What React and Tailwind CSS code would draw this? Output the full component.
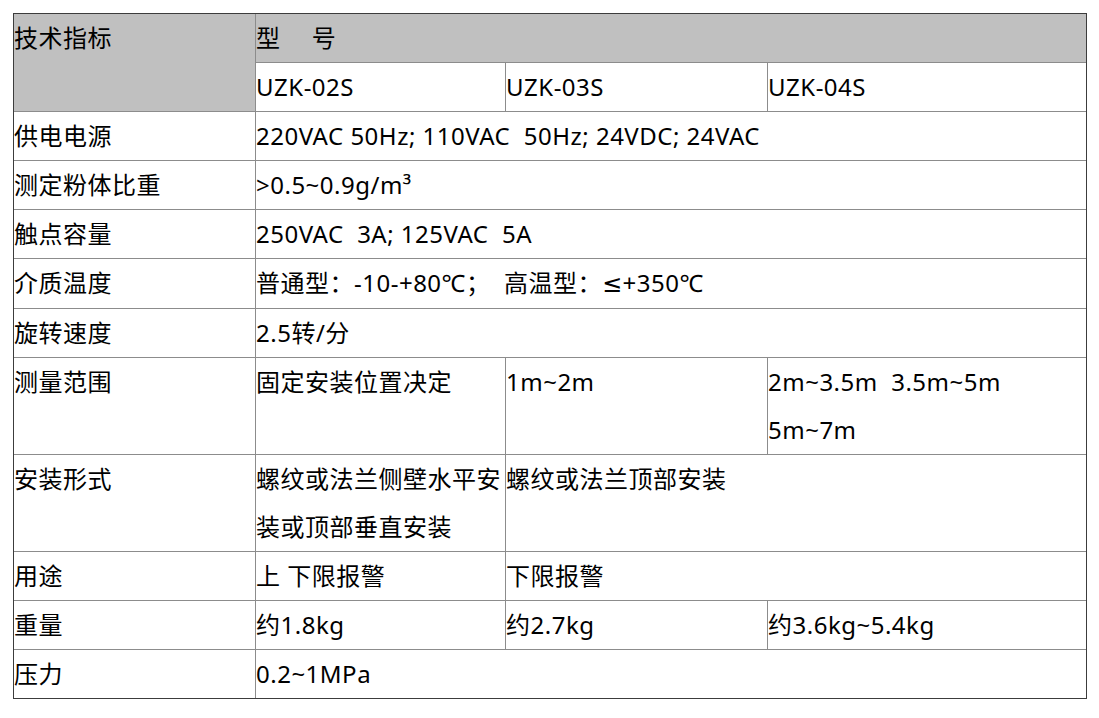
const cell = "border border-[#8c8c8c] p-0 align-top text-left font-normal";

function App() {
  return (
    <div className="min-h-screen bg-white pt-[13px] pl-[13px]">
      <div
        className="w-[1074px] border border-[#3c3c3c] text-[24px] leading-[48px] tracking-[0.5px] text-black"
        style={{ fontFamily: '"Noto Sans", "Noto Sans CJK SC", sans-serif' }}
      >
        <table className="w-full table-fixed border-collapse border-hidden">
          <colgroup>
            <col className="w-[241.5px]" />
            <col className="w-[250px]" />
            <col className="w-[262px]" />
            <col className="w-[318.5px]" />
          </colgroup>
          <tbody>
            <tr>
              <th rowSpan={2} className={cell + " bg-[#c0c0c0]"}>技术指标</th>
              <th colSpan={3} className={cell + " bg-[#c0c0c0] whitespace-pre"}>型　 号</th>
            </tr>
            <tr>
              <td className={cell}>UZK-02S</td>
              <td className={cell}>UZK-03S</td>
              <td className={cell}>UZK-04S</td>
            </tr>
            <tr>
              <td className={cell}>供电电源</td>
              <td colSpan={3} className={cell + " whitespace-pre"}>220VAC 50Hz; 110VAC  50Hz; 24VDC; 24VAC</td>
            </tr>
            <tr>
              <td className={cell}>测定粉体比重</td>
              <td colSpan={3} className={cell}>&gt;0.5~0.9g/m³</td>
            </tr>
            <tr>
              <td className={cell}>触点容量</td>
              <td colSpan={3} className={cell + " whitespace-pre"}>250VAC  3A; 125VAC  5A</td>
            </tr>
            <tr>
              <td className={cell}>介质温度</td>
              <td colSpan={3} className={cell + " whitespace-pre"}>
                普通型：-10-+80℃；  高温型：<span className="font-['DejaVu_Sans']">≤</span>+350℃
              </td>
            </tr>
            <tr>
              <td className={cell}>旋转速度</td>
              <td colSpan={3} className={cell}>2.5转/分</td>
            </tr>
            <tr>
              <td className={cell}>测量范围</td>
              <td className={cell}>固定安装位置决定</td>
              <td className={cell}>1m~2m</td>
              <td className={cell + " whitespace-pre"}>{"2m~3.5m  3.5m~5m\n5m~7m"}</td>
            </tr>
            <tr>
              <td className={cell}>安装形式</td>
              <td className={cell}>螺纹或法兰侧壁水平安装或顶部垂直安装</td>
              <td colSpan={2} className={cell}>螺纹或法兰顶部安装</td>
            </tr>
            <tr>
              <td className={cell}>用途</td>
              <td className={cell}>上 下限报警</td>
              <td colSpan={2} className={cell}>下限报警</td>
            </tr>
            <tr>
              <td className={cell}>重量</td>
              <td className={cell}>约1.8kg</td>
              <td className={cell}>约2.7kg</td>
              <td className={cell}>约3.6kg~5.4kg</td>
            </tr>
            <tr>
              <td className={cell}>压力</td>
              <td colSpan={3} className={cell}>0.2~1MPa</td>
            </tr>
          </tbody>
        </table>
      </div>
    </div>
  );
}

export default App;
